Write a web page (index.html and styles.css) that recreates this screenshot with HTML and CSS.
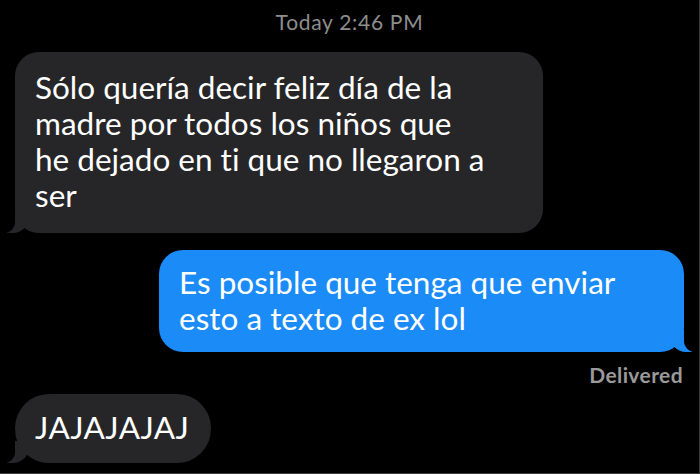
FILE: index.html
```html
<!DOCTYPE html>
<html lang="es">
<head>
<meta charset="utf-8">
<title>Mensajes</title>
<link rel="stylesheet" href="styles.css">
</head>
<body>
<div class="screen">
  <div class="timestamp">Today 2:46 PM</div>
  <div class="thread">
    <div class="row row-in">
      <div class="bubble bubble-in">Sólo quería decir feliz día de la<br>madre por todos los niños que<br>he dejado en ti que no llegaron a<br>ser</div>
    </div>
    <div class="row row-out">
      <div class="bubble bubble-out">Es posible que tenga que enviar<br>esto a texto de ex lol</div>
    </div>
    <div class="status">Delivered</div>
    <div class="row row-in">
      <div class="bubble bubble-in bubble-short">JAJAJAJAJ</div>
    </div>
  </div>
</div>
</body>
</html>
```

FILE: styles.css
```css
html, body {
  margin: 0;
  padding: 0;
  background: #000;
}
.screen {
  width: 700px;
  height: 474px;
  box-sizing: border-box;
  background: #000;
  border-right: 1px solid #3a3a3a;
  border-bottom: 1px solid #3a3a3a;
  overflow: hidden;
  font-family: Lato, "Liberation Sans", sans-serif;
  font-variant-ligatures: none;
  color: #fff;
}
.timestamp {
  text-align: center;
  color: #8e8e8e;
  font-size: 21px;
  letter-spacing: 0.7px;
  line-height: 24px;
  padding-top: 10px;
  height: 40px;
  box-sizing: border-box;
}
.thread {
  display: flex;
  flex-direction: column;
  padding: 12px 15px 0 15px;
}
.row {
  display: flex;
}
.row-out {
  justify-content: flex-end;
  margin-top: 17px;
}
.bubble {
  position: relative;
  box-sizing: border-box;
  font-size: 31.5px;
  line-height: 36px;
  border-radius: 24px;
  white-space: nowrap;
}
.bubble-in {
  background: #262628;
  padding: 17px 20px 20px 20px;
  width: 528px;
}
.bubble-out {
  background: #1b8bf8;
  padding: 14px 20px 16px 20px;
  width: 525px;
}
.bubble-short {
  width: auto;
  border-radius: 34px;
  padding: 15px 22px 18px 20px;
  letter-spacing: 0.4px;
}
.bubble-in::before {
  content: "";
  position: absolute;
  bottom: 0;
  left: -8px;
  width: 22px;
  height: 22px;
  background: #262628;
  border-bottom-right-radius: 16px;
}
.bubble-in::after {
  content: "";
  position: absolute;
  bottom: 0;
  left: -12px;
  width: 12px;
  height: 24px;
  background: #000;
  border-bottom-right-radius: 11px;
}
.bubble-out::before {
  content: "";
  position: absolute;
  bottom: 0;
  right: -8px;
  width: 22px;
  height: 22px;
  background: #1b8bf8;
  border-bottom-left-radius: 16px;
}
.bubble-out::after {
  content: "";
  position: absolute;
  bottom: 0;
  right: -12px;
  width: 12px;
  height: 24px;
  background: #000;
  border-bottom-left-radius: 11px;
}
.status {
  align-self: flex-end;
  color: #9a9a9a;
  font-size: 21px;
  font-weight: 700;
  letter-spacing: 0.4px;
  line-height: 22px;
  margin-top: 12px;
  margin-right: 1px;
  margin-bottom: 8px;
}
```
